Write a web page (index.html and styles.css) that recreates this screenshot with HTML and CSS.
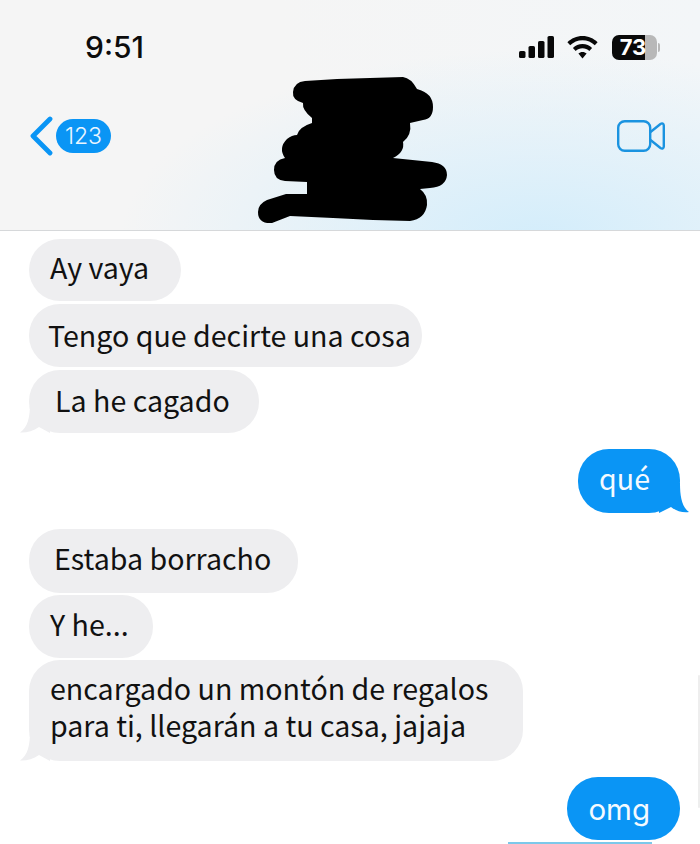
FILE: index.html
```html
<!DOCTYPE html>
<html lang="es">
<head>
  <meta charset="UTF-8">
  <title>Mensajes</title>
  <link rel="stylesheet" href="styles.css">
</head>
<body>

  <header class="top">
    <div class="status">
      <span class="time">9:51</span>
      <div class="status-icons">
        <svg class="signal" width="35" height="22" viewBox="0 0 35 22">
          <rect x="0" y="15" width="6.5" height="7" rx="1.6"/>
          <rect x="9.5" y="10" width="6.5" height="12" rx="1.6"/>
          <rect x="19" y="5" width="6.5" height="17" rx="1.6"/>
          <rect x="28.5" y="0" width="6.5" height="22" rx="1.6"/>
        </svg>
        <svg class="wifi" width="31" height="23" viewBox="0 0 31 23">
          <path d="M15.5 0C9.6 0 4.3 2.4 0.4 6.2L3.2 9.2C6.4 6.1 10.7 4.2 15.5 4.2S24.6 6.1 27.8 9.2L30.6 6.2C26.7 2.4 21.4 0 15.5 0Z"/>
          <path d="M15.5 8C11.8 8 8.4 9.5 5.9 11.9L8.7 14.9C10.5 13.2 12.9 12.2 15.5 12.2S20.5 13.2 22.3 14.9L25.1 11.9C22.6 9.5 19.2 8 15.5 8Z"/>
          <path d="M15.5 16C13.9 16 12.5 16.6 11.4 17.6L15.5 22.6L19.6 17.6C18.5 16.6 17.1 16 15.5 16Z"/>
        </svg>
        <div class="battery"><span>73</span></div>
      </div>
    </div>

    <nav class="nav">
      <div class="back">
        <svg class="chevron" width="24" height="40" viewBox="0 0 24 40">
          <path d="M21 3L4 20L21 37" fill="none" stroke="#0a95f5" stroke-width="4.8" stroke-linecap="round" stroke-linejoin="round"/>
        </svg>
        <span class="count">123</span>
      </div>
      <svg class="video" width="48" height="32" viewBox="0 0 48 32">
        <rect x="1.2" y="1.2" width="32" height="29.6" rx="6.5" fill="none" stroke="#1a93e0" stroke-width="2.4"/>
        <path d="M33.5 12L43.5 4C45.2 2.8 46.8 3.6 46.8 5.5V26.5C46.8 28.4 45.2 29.2 43.5 28L33.5 20" fill="none" stroke="#1a93e0" stroke-width="2.4" stroke-linejoin="round"/>
      </svg>
    </nav>

    <!-- tachado del nombre -->
    <svg class="scribble" width="700" height="230" viewBox="0 0 700 230">
      <path d="M293 92Q294 82 305 81L337 79L403 77Q411 78 417 89Q433 93 433 107Q433 119 423 120L410 123Q412 135 403 142Q405 152 393 158L432 162Q447 164 447 175Q446 187 430 188L420 189Q428 195 427 205Q425 219 410 221L373 220L333 218L290 216L272 223Q258 224 258 212Q258 204 267 200L286 194L307 194L307 182L285 181Q274 180 274 170Q274 160 285 158Q278 148 287 139Q292 135 297 135Q299 127 312 123L312 118Q302 110 303 103Q292 100 293 92Z"/>
    </svg>
  </header>

  <main class="chat">
    <div class="bubble in first pr-32">Ay vaya</div>
    <div class="bubble in low-3 pr-11 pl-19">Tengo que decirte una cosa</div>
    <div class="bubble in tail low-2 pl-26 pr-29">La he cagado</div>

    <div class="bubble out tail tall far pr-30">qué</div>

    <div class="bubble in tall far pl-25 pr-27">Estaba borracho</div>
    <div class="bubble in near pr-24">Y he...</div>
    <div class="bubble in tail near two-lines pr-35">encargado un montón de regalos<br>para ti, llegarán a tu casa, jajaja</div>

    <div class="bubble out far last pr-30">omg</div>
    <div class="next-peek"></div>
  </main>

  <div class="scroll-bar"></div>

</body>
</html>
```

FILE: styles.css
```css
* { box-sizing: border-box; }
html, body { margin: 0; height: 844px; overflow: hidden; background: #fff; }
body { font-family: 'Noto Sans CJK JP', 'Noto Sans', sans-serif; color: #111; }

/* cabecera */
.top {
  position: relative;
  height: 231px;
  border-bottom: 1px solid #d6d8da;
  background:
    radial-gradient(ellipse 420px 190px at 540px 240px, #d3edfb 0%, rgba(222,240,250,0.8) 45%, rgba(240,245,248,0) 100%),
    linear-gradient(to right, #f5f5f5 40%, #f3f6f8 100%);
}
.status { display: flex; justify-content: space-between; align-items: center; height: 36px; padding: 29px 43px 0 85px; box-sizing: content-box; }
.time { font-family: 'Inter', sans-serif; font-size: 30px; font-weight: 500; line-height: 36px; color: #0c0c0c; }
.status-icons { display: flex; align-items: center; gap: 13px; }
.signal, .wifi { fill: #080808; display: block; }
.battery {
  position: relative;
  width: 45px;
  height: 25px;
  margin-left: 1px;
  border-radius: 7px;
  background: linear-gradient(to right, #0a0a0a 0, #0a0a0a 33px, #b8b8b8 33px);
  text-align: center;
  font-family: 'Inter', sans-serif;
  font-size: 22px;
  font-weight: 700;
  line-height: 25px;
  color: #fff;
}
.battery span { display: block; margin-left: -3px; }
.battery::after {
  content: '';
  position: absolute;
  right: -3px;
  top: 8px;
  width: 2px;
  height: 9px;
  border-radius: 0 2px 2px 0;
  background: #b8b8b8;
}

.nav { display: flex; justify-content: space-between; align-items: center; height: 40px; margin-top: 51px; padding: 0 35px 0 29px; }
.back { display: flex; align-items: center; gap: 3px; }
.chevron, .video { display: block; }
.count {
  width: 55px;
  height: 34px;
  border-radius: 17px;
  background: #0a95f5;
  color: #eaf6ff;
  text-align: center;
  font-family: 'Inter', sans-serif;
  font-size: 23px;
  font-weight: 300;
  line-height: 34px;
}
.scribble { position: absolute; left: 0; top: 0; fill: #000; }

/* mensajes */
.chat { display: flex; flex-direction: column; align-items: flex-start; padding: 8px 20px 0 29px; }
.bubble {
  position: relative;
  margin-top: 3px;
  padding: 10px 21px 16px;
  border-radius: 31px;
  background: #eeeef0;
  font-size: 28.6px;
  line-height: 37px;
  white-space: nowrap;
}
.bubble.first { margin-top: 0; padding-top: 9px; }
.bubble.tall { padding-bottom: 17px; }
.bubble.far { margin-top: 16px; }
.bubble.near { margin-top: 2px; }
.bubble.low-3 { padding-top: 12px; padding-bottom: 14px; }
.bubble.low-2 { padding-top: 11px; padding-bottom: 15px; }
.bubble.two-lines { padding-top: 9px; padding-bottom: 18px; }
.bubble.out { align-self: flex-end; background: #0a95f5; color: #f4faff; }
.bubble.last { padding-top: 14px; padding-bottom: 12px; font-family: 'Inter', sans-serif; font-size: 29.5px; }

/* el texto no va centrado igual en cada globo */
.pl-19 { padding-left: 19px; }
.pl-25 { padding-left: 25px; }
.pl-26 { padding-left: 26px; }
.pr-11 { padding-right: 11px; }
.pr-24 { padding-right: 24px; }
.pr-27 { padding-right: 27px; }
.pr-29 { padding-right: 29px; }
.pr-30 { padding-right: 30px; }
.pr-32 { padding-right: 32px; }
.pr-35 { padding-right: 35px; }

.bubble.tail::after {
  content: '';
  position: absolute;
  bottom: 0;
  width: 30px;
  height: 30px;
  background: inherit;
}
.bubble.in.tail::after {
  left: -9px;
  clip-path: path('M10 0C10 14 8 24 0 29.5C6 30 13 28 19 24L30 30L30 0Z');
}
.bubble.out.tail::after {
  right: -9px;
  clip-path: path('M21 0C21 14 23 24 30 29C24 30 17 28 12 24L0 30L0 0Z');
}

.next-peek { align-self: flex-end; width: 144px; height: 2px; margin: 2px 28px 0 0; background: #7cc8ea; }
.scroll-bar { position: absolute; right: 0; top: 675px; width: 2px; height: 133px; border-radius: 1px; background: #eeeeee; }
```
